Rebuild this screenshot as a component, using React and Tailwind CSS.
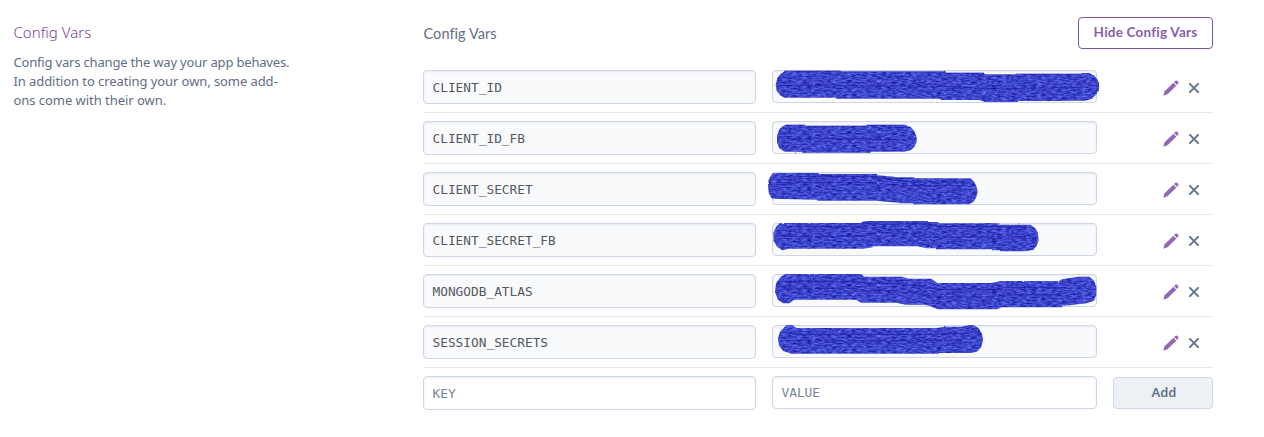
import React from "react";

// Scribble outlines are drawn at three units per pixel, relative to the field's corner.
const rows = [
  {
    name: "CLIENT_ID",
    d: "M36 5 L40 3 H206 V5 H520 V9 H636 V14 H732 V12 H928 V9 H952 L968 18 L976 28 L981 38 V58 L974 72 L960 86 L940 92 H900 L870 93 H738 V96 H640 L622 90 H506 V86 H192 V83 H38 L24 76 L14 62 L11 45 L16 24 L26 11 Z",
    top: "M36 5 L40 3 H206 V5 H520 V9 H636 V14 H732 V12 H928",
    core: "M20 46 H190 L510 49 L640 56 H740 L930 52",
  },
  {
    name: "CLIENT_ID_FB",
    d: "M40 12 H98 V15 H285 V12 H400 L416 18 L427 31 L434 48 V63 L427 78 L416 88 L396 92 H296 V95 H90 V92 H38 L22 82 L15 65 V45 L22 25 L32 16 Z",
    top: "M40 12 H98 V15 H285 V12 H400",
    core: "M30 53 H200 L300 55 H400",
  },
  {
    name: "CLIENT_SECRET",
    d: "M2 3 H140 V6 H316 V10 L368 14 V16 H428 V19 H596 L607 30 L614 45 L617 60 L612 78 L604 90 L592 97 H424 V94 H380 V92 L312 86 H136 V83 L0 80 L-9 65 L-12 45 L-10 22 Z",
    top: "M30 13 H300 L370 25 L430 30 H580",
    core: "M30 32 H300 L380 40 H580",
  },
  {
    name: "CLIENT_SECRET_FB",
    d: "M24 0 H268 V-3 L284 -6 H468 V-3 H500 V1 H682 V5 H776 L790 16 L798 30 L800 52 L794 68 L784 80 L762 85 H684 V82 H660 V79 H492 V76 H464 L436 70 H302 V73 L274 77 H50 L30 82 L14 70 L5 54 L4 30 L12 12 Z",
    top: "M40 11 H264 L290 3 H460 L500 10 H680 L760 15",
    core: "M30 40 H270 L300 30 H450 L500 42 H760",
  },
  {
    name: "MONGODB_ATLAS",
    d: "M40 0 H268 L276 8 H390 L410 14 H478 L496 27 H658 L686 21 H862 L870 16 L894 12 L920 8 H952 L966 20 L973 39 V62 L966 80 L944 88 L870 96 V100 H690 L674 106 H496 L474 96 L456 92 H400 L374 86 H268 L252 77 H66 L52 88 H34 L18 78 L9 54 L12 28 L26 8 Z",
    top: "M40 23 H250 L280 28 H370 L400 34 H460 L490 46 H660 L700 41 H880",
    core: "M30 43 H250 L280 50 H370 L400 56 H450 L480 69 H660 L700 63 H850 L880 58",
  },
  {
    name: "SESSION_SECRETS",
    d: "M44 0 H60 L74 9 H494 L520 5 H570 L590 0 H604 L620 10 L630 26 L633 44 L628 66 L614 80 L598 84 H500 V86 H58 L34 78 L21 62 L18 40 L24 20 Z",
    top: "M60 28 H500 L590 24",
    core: "M60 47 H450 L570 45",
  },
];

function ScribbleTexture() {
  return (
    <svg className="absolute h-0 w-0" aria-hidden="true">
      <defs>
        <filter id="ink" x="-2%" y="-10%" width="104%" height="120%" colorInterpolationFilters="sRGB">
          <feTurbulence type="fractalNoise" baseFrequency="0.2 0.65" numOctaves="4" seed="3" result="grain" />
          <feColorMatrix
            in="grain"
            values="0.5 0 0 0 -0.01  0.5 0 0 0 0.02  0.55 0 0 0 0.52  0 0 0 0 1"
            result="blue"
          />
          <feDisplacementMap in="SourceGraphic" in2="grain" scale="1.5" xChannelSelector="R" yChannelSelector="G" result="edge" />
          <feComposite in="blue" in2="edge" operator="in" />
        </filter>
      </defs>
    </svg>
  );
}

function Scribble({ d, top, core }) {
  return (
    <svg className="absolute -top-px -left-px h-[33px] w-[325px] overflow-visible" viewBox="0 0 325 33" aria-hidden="true">
      <g filter="url(#ink)">
        <path d={d} transform="scale(.33333)" fill="#3439c4" />
      </g>
      <g transform="scale(.33333)" fill="none" stroke="#1416a0" strokeWidth="3">
        <path d={top} opacity=".6" />
        <path d={core} opacity=".6" strokeDasharray="60 8 24 5" />
      </g>
    </svg>
  );
}

function Pencil() {
  return (
    <svg className="h-4 w-4" viewBox="0 0 16 16" fill="#9069b5" aria-hidden="true">
      <path d="M.3 15.7 1.6 11.2 10.4 2.8l2.9 2.9-8.8 8.5Z" />
      <path d="m11.1 2.1 1.3-1.3q.9-.8 1.8 0l1 1q.8.9 0 1.8L14 4.9Z" />
    </svg>
  );
}

function Cross() {
  return (
    <svg className="h-3 w-3" viewBox="0 0 12 12" stroke="#62738d" strokeWidth="2" strokeLinecap="round" aria-hidden="true">
      <path d="m1.9 1.9 8.2 8.2m0-8.2-8.2 8.2" />
    </svg>
  );
}

const field =
  "rounded-[4px] border border-[#cfd7e6] px-[8.5px] font-['DejaVu_Sans_Mono',monospace] text-[12.8px] shadow-[inset_0_1px_2px_rgba(207,215,230,0.45)]";

export default function App() {
  return (
    <main className="flex h-[437px] w-[1264px] bg-white pl-[13px] font-['Noto_Sans',sans-serif] text-[#5f6e84]">
      <ScribbleTexture />
      <aside className="w-[410px] shrink-0 pt-[21px] pl-[0.5px]">
        <h2 className="text-[15px] leading-[22px] font-light tracking-[0.02px] text-[#79429f]">Config Vars</h2>
        <p className="mt-[10px] text-[13px] leading-[19px]">
          <span className="tracking-[-0.18px]">Config vars change the way your app behaves.</span>
          <br />
          <span className="tracking-[-0.08px]">In addition to creating your own, some add-</span>
          <br />
          <span className="tracking-[-0.04px]">ons come with their own.</span>
        </p>
      </aside>
      <section className="w-[790px] shrink-0">
        <header className="flex h-[62px] items-start justify-between">
          <h3 className="pt-[24px] pl-[0.5px] font-['Lato',sans-serif] text-[14.5px] leading-5 tracking-[0.06px]">Config Vars</h3>
          <button className="mt-[17px] h-8 w-[135px] rounded-[4px] border border-[#79589f] pb-[2px] font-['Lato',sans-serif] text-[13.5px] leading-[28px] font-bold tracking-[0.22px] whitespace-nowrap text-[#8560a8]">
            Hide Config Vars
          </button>
        </header>
        {rows.map(({ name, d, top, core }) => (
          <div key={name} className="flex h-[51px] border-b border-[#e3e8f1] pt-2">
            <div className={`${field} h-[34px] w-[333px] bg-[#f9fafc] leading-[34px] text-[#55585c]`}>{name}</div>
            <div className={`${field} relative ml-4 h-[33px] w-[325px] bg-[#f9fafc]`}>
              <Scribble d={d} top={top} core={core} />
            </div>
            <div className="ml-auto flex h-9 items-center gap-[9px] pr-[13px]">
              <Pencil />
              <Cross />
            </div>
          </div>
        ))}
        <div className="flex h-[51px] pt-2">
          <div className={`${field} h-[34px] w-[333px] leading-[34px] text-[#74839c]`}>KEY</div>
          <div className={`${field} ml-4 h-[33px] w-[325px] leading-[32px] text-[#74839c]`}>VALUE</div>
          <button className="mt-px ml-4 h-8 w-[100px] rounded-[4px] border border-[#cfd7e6] bg-[#edf1f6] pb-[2px] pl-[2px] text-[13px] leading-[28px] font-semibold text-[#62738d]">
            Add
          </button>
        </div>
      </section>
    </main>
  );
}
